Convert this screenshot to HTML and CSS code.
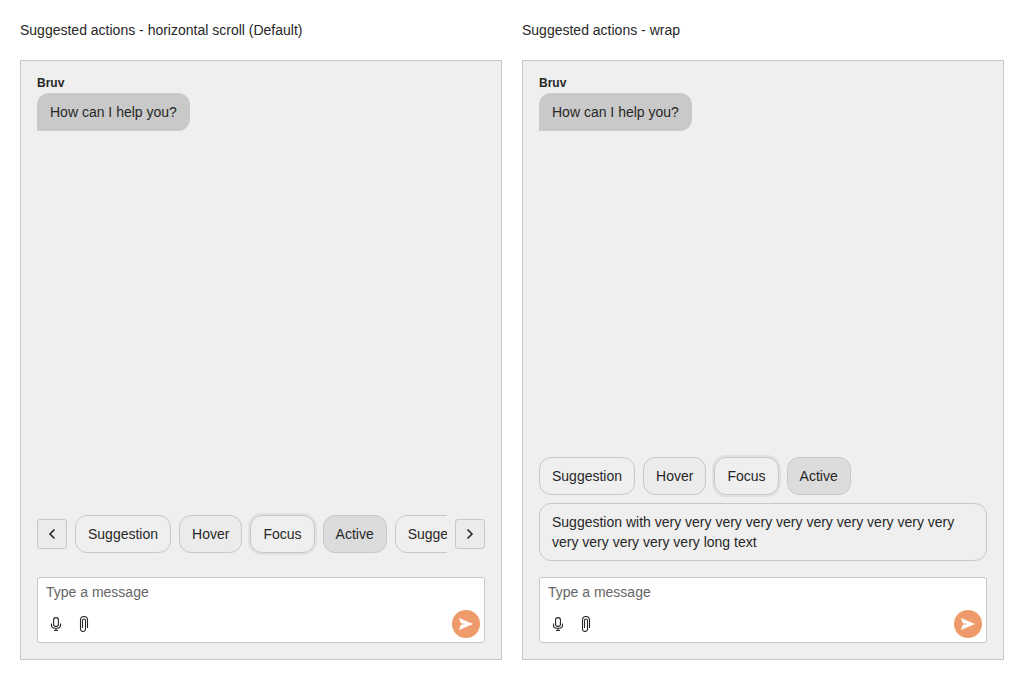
FILE: index.html
```html
<!DOCTYPE html>
<html lang="en">
<head>
<meta charset="utf-8">
<title>Chat suggested actions</title>
<link rel="stylesheet" href="styles.css">
</head>
<body>
<svg class="symbols" aria-hidden="true">
  <symbol id="mic" viewBox="0 0 16 16">
    <rect x="5.6" y="1.6" width="4.8" height="8.8" rx="2.2"/>
    <path d="M3.5 7.5V9A3.2 3.2 0 0 0 6.7 12.2H9.3A3.2 3.2 0 0 0 12.5 9V7.5M8 12.2V14.5M6 14.5H10"/>
  </symbol>
  <symbol id="clip" viewBox="0 0 16 16">
    <path d="M11.5 12V4A3.5 3.5 0 0 0 4.5 4V13A2.5 2.5 0 0 0 9.5 13V4.5A1.5 1.5 0 0 0 6.5 4.5V12"/>
  </symbol>
  <symbol id="plane" viewBox="0 0 16 16">
    <path d="M1 2L15 8L1 14L2.8 8.7L8 8L2.8 7.3Z"/>
  </symbol>
</svg>
<main class="examples">
  <section class="example">
    <h2 class="title">Suggested actions - horizontal scroll (Default)</h2>
    <div class="chat">
      <div class="messages">
        <p class="author">Bruv</p>
        <p class="bubble">How can I help you?</p>
      </div>
      <div class="scroller">
        <button class="scroll-button" aria-label="Previous"><svg class="arrow" viewBox="0 0 16 16"><path d="M10.5 3.5L6 8L10.5 12.5"/></svg></button>
        <div class="suggestions">
          <span class="suggestion">Suggestion</span>
          <span class="suggestion hover">Hover</span>
          <span class="suggestion focus">Focus</span>
          <span class="suggestion active">Active</span>
          <span class="suggestion">Suggestion</span>
        </div>
        <button class="scroll-button" aria-label="Next"><svg class="arrow" viewBox="0 0 16 16"><path d="M5.5 3.5L10 8L5.5 12.5"/></svg></button>
      </div>
      <div class="message-box">
        <input class="message-input" placeholder="Type a message">
        <div class="toolbar">
          <button class="tool" aria-label="Speak"><svg class="icon"><use href="#mic"/></svg></button>
          <button class="tool" aria-label="Attach"><svg class="icon"><use href="#clip"/></svg></button>
          <button class="send" aria-label="Send"><svg class="plane"><use href="#plane"/></svg></button>
        </div>
      </div>
    </div>
  </section>
  <section class="example">
    <h2 class="title">Suggested actions - wrap</h2>
    <div class="chat">
      <div class="messages">
        <p class="author">Bruv</p>
        <p class="bubble">How can I help you?</p>
      </div>
      <div class="suggestions wrap">
        <span class="suggestion">Suggestion</span>
        <span class="suggestion hover">Hover</span>
        <span class="suggestion focus">Focus</span>
        <span class="suggestion active">Active</span>
        <span class="suggestion">Suggestion with very very very very very very very very very very very very very very very long text</span>
      </div>
      <div class="message-box">
        <input class="message-input" placeholder="Type a message">
        <div class="toolbar">
          <button class="tool" aria-label="Speak"><svg class="icon"><use href="#mic"/></svg></button>
          <button class="tool" aria-label="Attach"><svg class="icon"><use href="#clip"/></svg></button>
          <button class="send" aria-label="Send"><svg class="plane"><use href="#plane"/></svg></button>
        </div>
      </div>
    </div>
  </section>
</main>
</body>
</html>
```
FILE: styles.css
```css
* { box-sizing: border-box; }
body {
  margin: 0;
  background: #fff;
  color: #272727;
  font: 14px/20px "Liberation Sans", Arial, sans-serif;
}
button { padding: 0; border: 0; background: none; color: inherit; font: inherit; }
.symbols { display: none; }
.examples {
  display: grid;
  grid-template-columns: 482px 482px;
  gap: 20px;
  padding: 20px;
}
.title { margin: 0 0 20px; font-size: 14px; font-weight: 400; line-height: 20px; }
.chat {
  display: flex;
  flex-direction: column;
  height: 600px;
  padding: 16px;
  border: 1px solid #c8c8c8;
  background: #efefef;
}
.messages { flex: 1; display: flex; flex-direction: column; align-items: flex-start; }
.author { margin: 0; font-size: 12px; font-weight: 700; line-height: 12px; }
.bubble {
  margin: 4px 0 0;
  padding: 9px 13px;
  border-radius: 12px 12px 12px 0;
  background: #c9c9c9;
}
.scroller { display: flex; align-items: center; gap: 8px; height: 38px; margin-bottom: 24px; }
.scroll-button {
  display: flex;
  flex: none;
  align-items: center;
  justify-content: center;
  width: 30px;
  height: 30px;
  border: 1px solid #c8c8c8;
  border-radius: 3px;
  background: #ebebeb;
}
.arrow { width: 16px; height: 16px; fill: none; stroke: #272727; stroke-width: 1.6; }
.suggestions { display: flex; flex: 1; gap: 8px; min-width: 0; }
.scroller .suggestions { overflow: hidden; margin: -4px 0; padding: 4px 0; }
.suggestions.wrap { flex: none; flex-wrap: wrap; margin-bottom: 16px; }
.suggestion {
  flex: none;
  max-width: 100%;
  padding: 8px 12px;
  border: 1px solid #c8c8c8;
  border-radius: 12px;
  background: #efefef;
}
.hover { background: #ebebeb; }
.focus { box-shadow: 0 0 0 2px #e1e1e1; }
.active { background: #dcdcdc; }
.message-box {
  height: 66px;
  border: 1px solid #c8c8c8;
  border-radius: 3px;
  background: #fff;
}
.message-input {
  display: block;
  width: 100%;
  height: 28px;
  padding: 4px 8px;
  border: 0;
  background: none;
  color: inherit;
  font: inherit;
}
.message-input::placeholder { color: #666; opacity: 1; }
.toolbar { display: flex; padding: 4px; }
.tool, .send { display: flex; align-items: center; justify-content: center; width: 28px; height: 28px; }
.icon { width: 16px; height: 16px; fill: none; stroke: #272727; stroke-width: 1.1; }
.send { margin-left: auto; border-radius: 50%; background: #ee9b6b; }
.plane { width: 16px; height: 16px; fill: #fff; }
```
